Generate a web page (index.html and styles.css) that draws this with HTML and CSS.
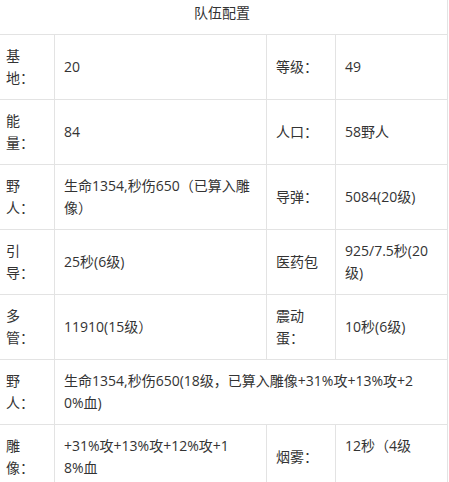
FILE: index.html
```html
<!DOCTYPE html>
<html lang="zh-CN">
<head>
<meta charset="utf-8">
<title>队伍配置</title>
<link rel="stylesheet" href="styles.css">
</head>
<body>
<table class="team">
  <colgroup>
    <col class="c1">
    <col class="c2">
    <col class="c3">
    <col class="c4">
  </colgroup>
  <tr>
    <th class="head" colspan="4">队伍配置</th>
  </tr>
  <tr>
    <td class="label">基地：</td>
    <td>20</td>
    <td class="label2">等级：</td>
    <td>49</td>
  </tr>
  <tr>
    <td class="label">能量：</td>
    <td>84</td>
    <td class="label2">人口：</td>
    <td>58野人</td>
  </tr>
  <tr>
    <td class="label">野人：</td>
    <td>生命1354,秒伤650（已算入雕像）</td>
    <td class="label2">导弹：</td>
    <td>5084(20级)</td>
  </tr>
  <tr>
    <td class="label">引导：</td>
    <td>25秒(6级)</td>
    <td class="label2">医药包</td>
    <td>925/7.5秒(20级)</td>
  </tr>
  <tr>
    <td class="label">多管：</td>
    <td>11910(15级）</td>
    <td class="label2">震动蛋：</td>
    <td>10秒(6级)</td>
  </tr>
  <tr>
    <td class="label">野人：</td>
    <td colspan="3">生命1354,秒伤650(18级，已算入雕像+31%攻+13%攻+2<br>0%血)</td>
  </tr>
  <tr>
    <td class="label">雕像：</td>
    <td>+31%攻+13%攻+12%攻+1<br>8%血</td>
    <td class="label2">烟雾：</td>
    <td class="top">12秒（4级</td>
  </tr>
</table>
</body>
</html>
```

FILE: styles.css
```css
html, body {
  margin: 0;
  padding: 0;
  background: #ffffff;
}

body {
  font-family: "Open Sans", "Noto Sans CJK SC", sans-serif;
  font-size: 14px;
  line-height: 22px;
  color: #333333;
  overflow: hidden;
}

.team {
  border-collapse: collapse;
  table-layout: fixed;
  width: 451px;
  margin: -9px 0 0 -4px;
}

.c1 { width: 58px; }
.c2 { width: 212px; }
.c3 { width: 69px; }
.c4 { width: 112px; }

.team th,
.team td {
  border: 1px solid #e3e3e3;
  padding: 10px 9px;
  vertical-align: middle;
  text-align: left;
  font-weight: normal;
}

.team .head {
  text-align: center;
}

.team .label {
  padding-right: 22px;
}

.team .top {
  vertical-align: top;
}
```
